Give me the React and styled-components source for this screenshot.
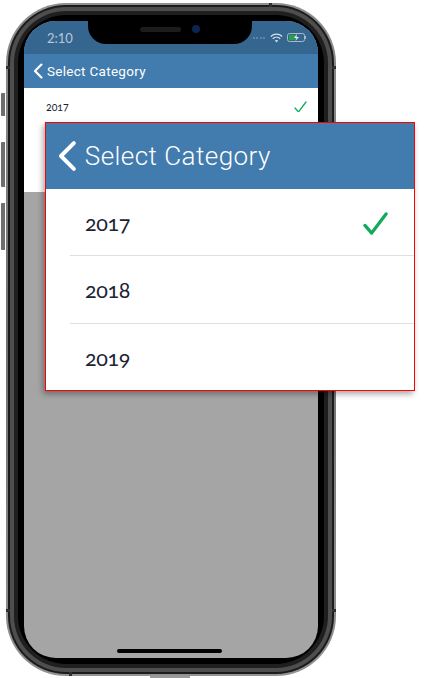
import styled, { createGlobalStyle } from "styled-components";

const GlobalStyle = createGlobalStyle`
  html, body {
    margin: 0;
    padding: 0;
    background: #fff;
  }
  body {
    font-family: Lato, "Open Sans", "Liberation Sans", sans-serif;
    font-variant-numeric: oldstyle-nums;
  }
`;

const Page = styled.div`
  position: relative;
  width: 424px;
  height: 678px;
  padding: 3px 0 0 6px;
  box-sizing: border-box;
  overflow: hidden;
`;

const Phone = styled.div`
  position: relative;
  width: 330px;
  height: 673px;
  box-sizing: border-box;
  padding: 2px;
  border-radius: 60px;
  background: linear-gradient(180deg, #8f8f8f 0%, #6f6f6f 50%, #939393 100%);
`;

const Band = styled.div`
  height: 100%;
  box-sizing: border-box;
  padding: ${(props) => props.$pad}px;
  border-radius: ${(props) => props.$radius}px;
  background: ${(props) => props.$color};
`;

const Screen = styled.div`
  position: relative;
  display: flex;
  flex-direction: column;
  height: 100%;
  border-radius: 32px;
  overflow: hidden;
  background: #a5a5a5;
`;

const Notch = styled.div`
  position: absolute;
  top: 0;
  left: 64px;
  width: 164px;
  height: 23px;
  border-radius: 0 0 18px 18px;
  background: #000;
  display: flex;
  align-items: center;
  justify-content: center;
  gap: 11px;
  padding-bottom: 7px;
  box-sizing: border-box;
`;

const Speaker = styled.div`
  width: 41px;
  height: 5px;
  border-radius: 3px;
  background: #1c1c1c;
`;

const Camera = styled.div`
  width: 8px;
  height: 8px;
  border-radius: 50%;
  background: #0c2550;
`;

const StatusBar = styled.div`
  display: flex;
  align-items: center;
  justify-content: space-between;
  height: 33px;
  padding: 0 11px 0 23px;
  box-sizing: border-box;
  background: #35668f;
  color: #b9c8d6;
  font-size: 13px;
  font-variant-numeric: lining-nums;
`;

const StatusIcons = styled.div`
  display: flex;
  align-items: center;
  gap: 4px;
`;

const SignalDots = styled.div`
  display: flex;
  gap: 1.5px;
  margin-right: 1px;
`;

const Dot = styled.div`
  width: 2px;
  height: 2px;
  border-radius: 50%;
  background: #6f8ea8;
`;

const NavBar = styled.div`
  display: flex;
  align-items: center;
  gap: ${(props) => (props.$large ? 8 : 4)}px;
  height: ${(props) => (props.$large ? 66 : 34)}px;
  padding-left: ${(props) => (props.$large ? 11 : 9)}px;
  box-sizing: border-box;
  background: #427bad;
  color: #fff;
  font-family: Roboto, "Open Sans", sans-serif;
  font-size: ${(props) => (props.$large ? 26 : 13.5)}px;
  font-weight: ${(props) => (props.$large ? 300 : 400)};
  letter-spacing: ${(props) => (props.$large ? 0.45 : 0.3)}px;
`;

const List = styled.div`
  background: #fff;
`;

const MiniRow = styled.div`
  display: flex;
  align-items: center;
  justify-content: space-between;
  height: 37px;
  padding: 0 11px 0 22px;
  color: #1a2433;
  font-size: 10.5px;
`;

const MiniSpacer = styled.div`
  height: 67px;
`;

const HomeBar = styled.div`
  position: absolute;
  left: 93px;
  bottom: 5px;
  width: 105px;
  height: 4px;
  border-radius: 2px;
  background: #000;
`;

const SideButton = styled.div`
  position: absolute;
  left: -5px;
  top: ${(props) => props.$top}px;
  width: 4px;
  height: ${(props) => props.$height}px;
  border-radius: 1px 0 0 1px;
  background: #6f6f6f;
`;

const Port = styled.div`
  position: absolute;
  left: 144px;
  bottom: -2px;
  width: 40px;
  height: 2px;
  background: #9a9a9a;
`;

// antenna lines cut through the metal edge
const EdgeTick = styled.div`
  position: absolute;
  background: #2a3038;
  ${(props) =>
    props.$side === "left" ? `left: 0; top: ${props.$at}px; width: 4px; height: 3px;` : ""}
  ${(props) =>
    props.$side === "right" ? `right: 0; top: ${props.$at}px; width: 4px; height: 3px;` : ""}
  ${(props) =>
    props.$side === "top" ? `top: 0; left: ${props.$at}px; width: 3px; height: 4px;` : ""}
  ${(props) =>
    props.$side === "bottom" ? `bottom: 0; left: ${props.$at}px; width: 3px; height: 4px;` : ""}
`;

const Callout = styled.div`
  position: absolute;
  left: 45px;
  top: 122px;
  width: 370px;
  height: 269px;
  box-sizing: border-box;
  border: 1px solid #f00;
  background: #fff;
  box-shadow: -2px 3px 6px rgba(0, 0, 0, 0.35);
`;

const Rows = styled.div`
  padding-left: 24px;
`;

const Row = styled.div`
  display: flex;
  align-items: center;
  justify-content: space-between;
  height: ${(props) => (props.$first ? 67 : 68)}px;
  padding: ${(props) => (props.$first ? 2 : 0)}px 26px 0 15px;
  box-sizing: border-box;
  color: #1a2433;
  font-size: 21.5px;
  letter-spacing: -0.4px;
  border-bottom: ${(props) => (props.$last ? "none" : "1px solid #e0e0e0")};
`;

function Chevron({ size, width }) {
  return (
    <svg width={size * 0.62} height={size} viewBox="0 0 20 32" fill="none">
      <path d="M17 3 L4 16 L17 29" stroke="#fff" strokeWidth={width} strokeLinecap="round" strokeLinejoin="round" />
    </svg>
  );
}

function Check({ size, width }) {
  return (
    <svg width={size} height={size * 0.92} viewBox="0 0 26 24" fill="none">
      <path d="M2 14 L9 22 L24 2" stroke="#12ab5c" strokeWidth={width} strokeLinecap="round" strokeLinejoin="round" />
    </svg>
  );
}

function Wifi() {
  return (
    <svg width="13" height="10" viewBox="0 0 16 12" fill="none" stroke="#d5dee6" strokeWidth="1.6">
      <path d="M1 4.2 C5 0.4 11 0.4 15 4.2" />
      <path d="M3.4 6.8 C6 4.4 10 4.4 12.6 6.8" />
      <path d="M8 11.5 L5.8 9.2 C7 8.2 9 8.2 10.2 9.2 Z" fill="#d5dee6" stroke="none" />
    </svg>
  );
}

function Battery() {
  return (
    <svg width="20" height="9" viewBox="0 0 20 9">
      <rect x="0.5" y="0.5" width="17" height="8" rx="2" fill="none" stroke="#a9bac9" />
      <rect x="2" y="2" width="7" height="5" fill="#27a04a" />
      <path d="M18.5 3 V6" stroke="#a9bac9" />
      <path d="M10 1 L7 5 H9.5 L8.5 8 L12 4 H9.5 Z" fill="#e6edf2" />
    </svg>
  );
}

export default function App() {
  return (
    <Page>
      <GlobalStyle />
      <Phone>
        <SideButton $top={90} $height={23} />
        <SideButton $top={139} $height={45} />
        <SideButton $top={200} $height={47} />
        <Band $pad={2} $radius={58} $color="#1c1c1c">
          <Band $pad={4} $radius={56} $color="#4e4e4e">
            <Band $pad={4} $radius={52} $color="#1f1f1f">
              <Band $pad={6} $radius={48} $color="#000">
                <Screen>
                  <StatusBar>
                    2:10
                    <StatusIcons>
                      <SignalDots>
                        <Dot />
                        <Dot />
                        <Dot />
                        <Dot />
                      </SignalDots>
                      <Wifi />
                      <Battery />
                    </StatusIcons>
                  </StatusBar>
                  <NavBar>
                    <Chevron size={16} width={4.5} />
                    Select Category
                  </NavBar>
                  <List>
                    <MiniRow>
                      2017
                      <Check size={13} width={2.6} />
                    </MiniRow>
                    <MiniSpacer />
                  </List>
                  <Notch>
                    <Speaker />
                    <Camera />
                  </Notch>
                  <HomeBar />
                </Screen>
              </Band>
            </Band>
          </Band>
        </Band>
        <EdgeTick $side="top" $at={263} />
        <EdgeTick $side="left" $at={63} />
        <EdgeTick $side="right" $at={63} />
        <EdgeTick $side="left" $at={606} />
        <EdgeTick $side="right" $at={606} />
        <EdgeTick $side="bottom" $at={63} />
        <Port />
      </Phone>
      <Callout>
        <NavBar $large>
          <Chevron size={32} width={4} />
          Select Category
        </NavBar>
        <Rows>
          <Row $first>
            2017
            <Check size={25} width={3.4} />
          </Row>
          <Row>2018</Row>
          <Row $last>2019</Row>
        </Rows>
      </Callout>
    </Page>
  );
}
